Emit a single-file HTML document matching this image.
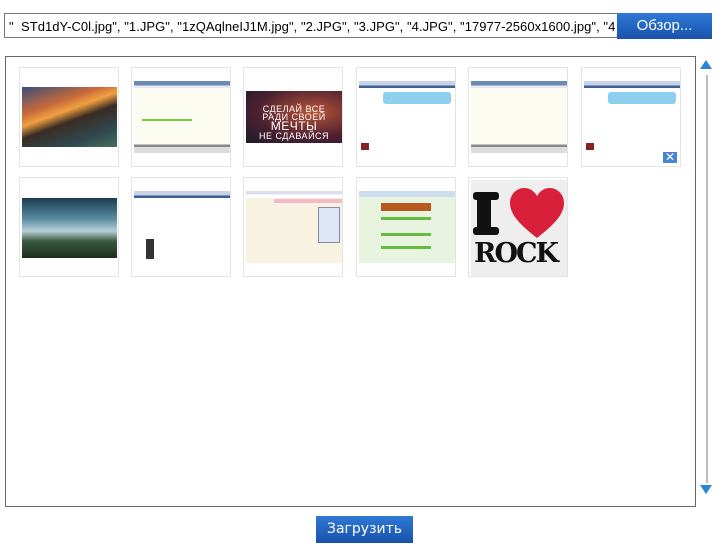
<!DOCTYPE html>
<html><head><meta charset="utf-8"><style>
body{margin:0;width:728px;height:548px;background:#fff;position:relative;overflow:hidden;font-family:"Liberation Sans",sans-serif}
.abs{position:absolute}
.inp{left:4px;top:13px;width:613px;height:25px;border:1px solid #777;border-right:none;font-size:13px;line-height:25px;white-space:nowrap;overflow:hidden;padding-left:4px;box-sizing:border-box;color:#000;letter-spacing:0.05px}
.btn{background:linear-gradient(#2f79d6,#1853ad);color:#fff;text-align:center}
.box{left:5px;top:56px;width:691px;height:451px;border:1px solid #666;box-sizing:border-box}
.cell{width:100px;height:100px;border:1px solid #e4e4e4;box-sizing:border-box;background:#fff}
.im{position:absolute}
.scr{background:linear-gradient(#6a8ab8 0 6%,#e8e8f0 6% 10%,#fdfcf2 10% 88%,#888 88% 92%,#ddd 92%)}
.web{background:linear-gradient(#c9d3e6 0 6%,#3c5f94 6% 10%,#fff 10%)}
</style></head><body>
<div class="abs inp">"&nbsp; STd1dY-C0l.jpg", "1.JPG", "1zQAqlneIJ1M.jpg", "2.JPG", "3.JPG", "4.JPG", "17977-2560x1600.jpg", "4</div>
<div class="abs btn" style="left:617px;top:13px;width:95px;height:26px;line-height:26px;font-size:15px">Обзор...</div>
<div class="abs box"></div>

<div class="abs cell" style="left:19px;top:67px"><div class="im" style="left:2px;top:19px;width:95px;height:60px;background:linear-gradient(160deg,#3a4f7a 0%,#c86a3a 30%,#f0a040 42%,#3a2c24 55%,#2f4a50 80%,#4a7060 100%)"></div></div>
<div class="abs cell" style="left:131px;top:67px"><div class="im scr" style="left:2px;top:13px;width:96px;height:72px"><div class="abs" style="left:8px;top:38px;width:50px;height:2px;background:#7c4"></div></div></div>
<div class="abs cell" style="left:243px;top:67px"><div class="im" style="left:2px;top:23px;width:96px;height:52px;background:radial-gradient(ellipse at 70% 40%,#b8543a,#4a2030 60%,#1c1a2c);color:#fff;font-size:9px;line-height:8px;text-align:center;padding-top:14px;box-sizing:border-box;letter-spacing:.5px">СДЕЛАЙ ВСЕ<br>РАДИ СВОЕЙ<br><span style="font-size:12px;line-height:11px">МЕЧТЫ</span><br>НЕ СДАВАЙСЯ</div></div>
<div class="abs cell" style="left:356px;top:67px"><div class="im web" style="left:2px;top:13px;width:96px;height:72px"><div class="abs" style="left:24px;top:11px;width:68px;height:12px;background:#8ccfef;border-radius:3px"></div><div class="abs" style="left:2px;top:62px;width:8px;height:7px;background:#822"></div></div></div>
<div class="abs cell" style="left:468px;top:67px"><div class="im scr" style="left:2px;top:13px;width:96px;height:72px"></div></div>
<div class="abs cell" style="left:581px;top:67px"><div class="im web" style="left:2px;top:13px;width:96px;height:72px"><div class="abs" style="left:24px;top:11px;width:68px;height:12px;background:#8ccfef;border-radius:3px"></div><div class="abs" style="left:2px;top:62px;width:8px;height:7px;background:#822"></div></div></div>
<div class="abs" style="left:663px;top:152px;width:14px;height:11px;background:#4a86d0;color:#fff;font-size:12px;line-height:11px;text-align:center">✕</div>

<div class="abs cell" style="left:19px;top:177px"><div class="im" style="left:2px;top:20px;width:95px;height:60px;background:linear-gradient(#1a3c52 0%,#5c8ca0 35%,#b8d0d8 55%,#3a5a40 72%,#1c2c18 100%)"></div></div>
<div class="abs cell" style="left:131px;top:177px"><div class="im web" style="left:2px;top:13px;width:96px;height:72px"><div class="abs" style="left:12px;top:48px;width:8px;height:20px;background:#333"></div></div></div>
<div class="abs cell" style="left:243px;top:177px"><div class="im" style="left:2px;top:13px;width:96px;height:72px;background:linear-gradient(#dde 0 5%,#fff 5% 10%,#f8f3e0 10%)"><div class="abs" style="left:28px;top:8px;width:68px;height:4px;background:#f4b8c8"></div><div class="abs" style="left:72px;top:16px;width:20px;height:34px;background:#dfe6f6;border:1px solid #88a"></div></div></div>
<div class="abs cell" style="left:356px;top:177px"><div class="im" style="left:2px;top:13px;width:96px;height:72px;background:linear-gradient(#cde 0 8%,#e8f4e0 8%)"><div class="abs" style="left:22px;top:12px;width:50px;height:8px;background:#b85a20"></div><div class="abs" style="left:22px;top:26px;width:50px;height:3px;background:#6b4"></div><div class="abs" style="left:22px;top:42px;width:50px;height:3px;background:#6b4"></div><div class="abs" style="left:22px;top:55px;width:50px;height:3px;background:#6b4"></div></div></div>
<div class="abs cell" style="left:468px;top:177px"><div class="im" style="left:2px;top:2px;width:96px;height:96px;background:#eee;overflow:hidden">
<div class="abs" style="left:6px;top:14px;width:8px;height:40px;background:#111"></div><div class="abs" style="left:2px;top:12px;width:26px;height:8px;background:#111;border-radius:3px"></div><div class="abs" style="left:2px;top:47px;width:26px;height:8px;background:#111;border-radius:3px"></div><div class="abs" style="left:12px;top:14px;width:8px;height:40px;background:#111"></div>
<svg class="abs" style="left:38px;top:8px" width="56" height="52" viewBox="0 0 56 52"><path d="M28 50 C10 36 1 26 1 15 C1 6 8 0 15 0 C21 0 25 3 28 8 C31 3 35 0 41 0 C48 0 55 6 55 15 C55 26 46 36 28 50Z" fill="#d8203a"/></svg>
<div class="abs" style="left:3px;top:60px;font:bold 27px/28px 'DejaVu Serif','Liberation Serif',serif;color:#111;letter-spacing:-2px">ROCK</div></div></div>

<div class="abs" style="left:700px;top:60px;width:0;height:0;border-left:6px solid transparent;border-right:6px solid transparent;border-bottom:9px solid #2a86d0"></div>
<div class="abs" style="left:706px;top:75px;width:2px;height:408px;background:#bbb"></div>
<div class="abs" style="left:700px;top:485px;width:0;height:0;border-left:6px solid transparent;border-right:6px solid transparent;border-top:9px solid #2a86d0"></div>

<div class="abs btn" style="left:316px;top:516px;width:97px;height:27px;line-height:27px;font-size:14px;font-family:'DejaVu Sans',sans-serif">Загрузить</div>
</body></html>
